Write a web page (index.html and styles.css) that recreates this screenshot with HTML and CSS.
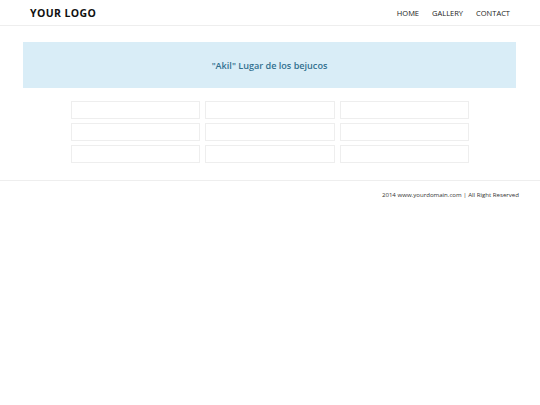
FILE: index.html
```html
<!DOCTYPE html>
<html>
<head>
<meta charset="utf-8">
<link rel="stylesheet" href="styles.css">
</head>
<body>
<header class="topbar">
  <div class="logo">YOUR LOGO</div>
  <nav class="nav">
    <a href="#">HOME</a>
    <a href="#">GALLERY</a>
    <a href="#">CONTACT</a>
  </nav>
</header>
<main class="main">
  <div class="banner">"Akil" Lugar de los bejucos</div>
  <div class="grid">
    <div class="cell"></div><div class="cell"></div><div class="cell"></div>
    <div class="cell"></div><div class="cell"></div><div class="cell"></div>
    <div class="cell"></div><div class="cell"></div><div class="cell"></div>
  </div>
</main>
<footer class="footer">2014 www.yourdomain.com | All Right Reserved</footer>
</body>
</html>
```
FILE: styles.css
```css
html, body {
  margin: 0;
  padding: 0;
  background: #fff;
  font-family: "Open Sans", "Liberation Sans", sans-serif;
  color: #333;
}
.topbar {
  height: 25px;
  border-bottom: 1px solid #eee;
  display: flex;
  align-items: center;
  justify-content: space-between;
  padding: 0 30px 0 30px;
}
.logo {
  font-size: 10.5px;
  font-weight: 700;
  letter-spacing: 0.4px;
  color: #111;
}
.nav {
  display: flex;
  gap: 13px;
}
.nav a {
  font-size: 7.5px;
  color: #222;
  text-decoration: none;
}
.main {
  padding-top: 16px;
}
.banner {
  margin: 0 24px 0 23px;
  height: 46px;
  background: #d9edf7;
  color: #31708f;
  font-size: 9.1px;
  font-weight: 600;
  display: flex;
  align-items: center;
  justify-content: center;
}
.grid {
  width: 398px;
  margin: 13px auto 0;
  display: grid;
  grid-template-columns: repeat(3, 1fr);
  column-gap: 5px;
  row-gap: 4px;
}
.cell {
  height: 16px;
  border: 1px solid #eee;
}
.footer {
  margin-top: 17px;
  border-top: 1px solid #eee;
  height: 26px;
  display: flex;
  align-items: center;
  justify-content: flex-end;
  padding-right: 21px;
  font-size: 6.1px;
  color: #333;
}
```
